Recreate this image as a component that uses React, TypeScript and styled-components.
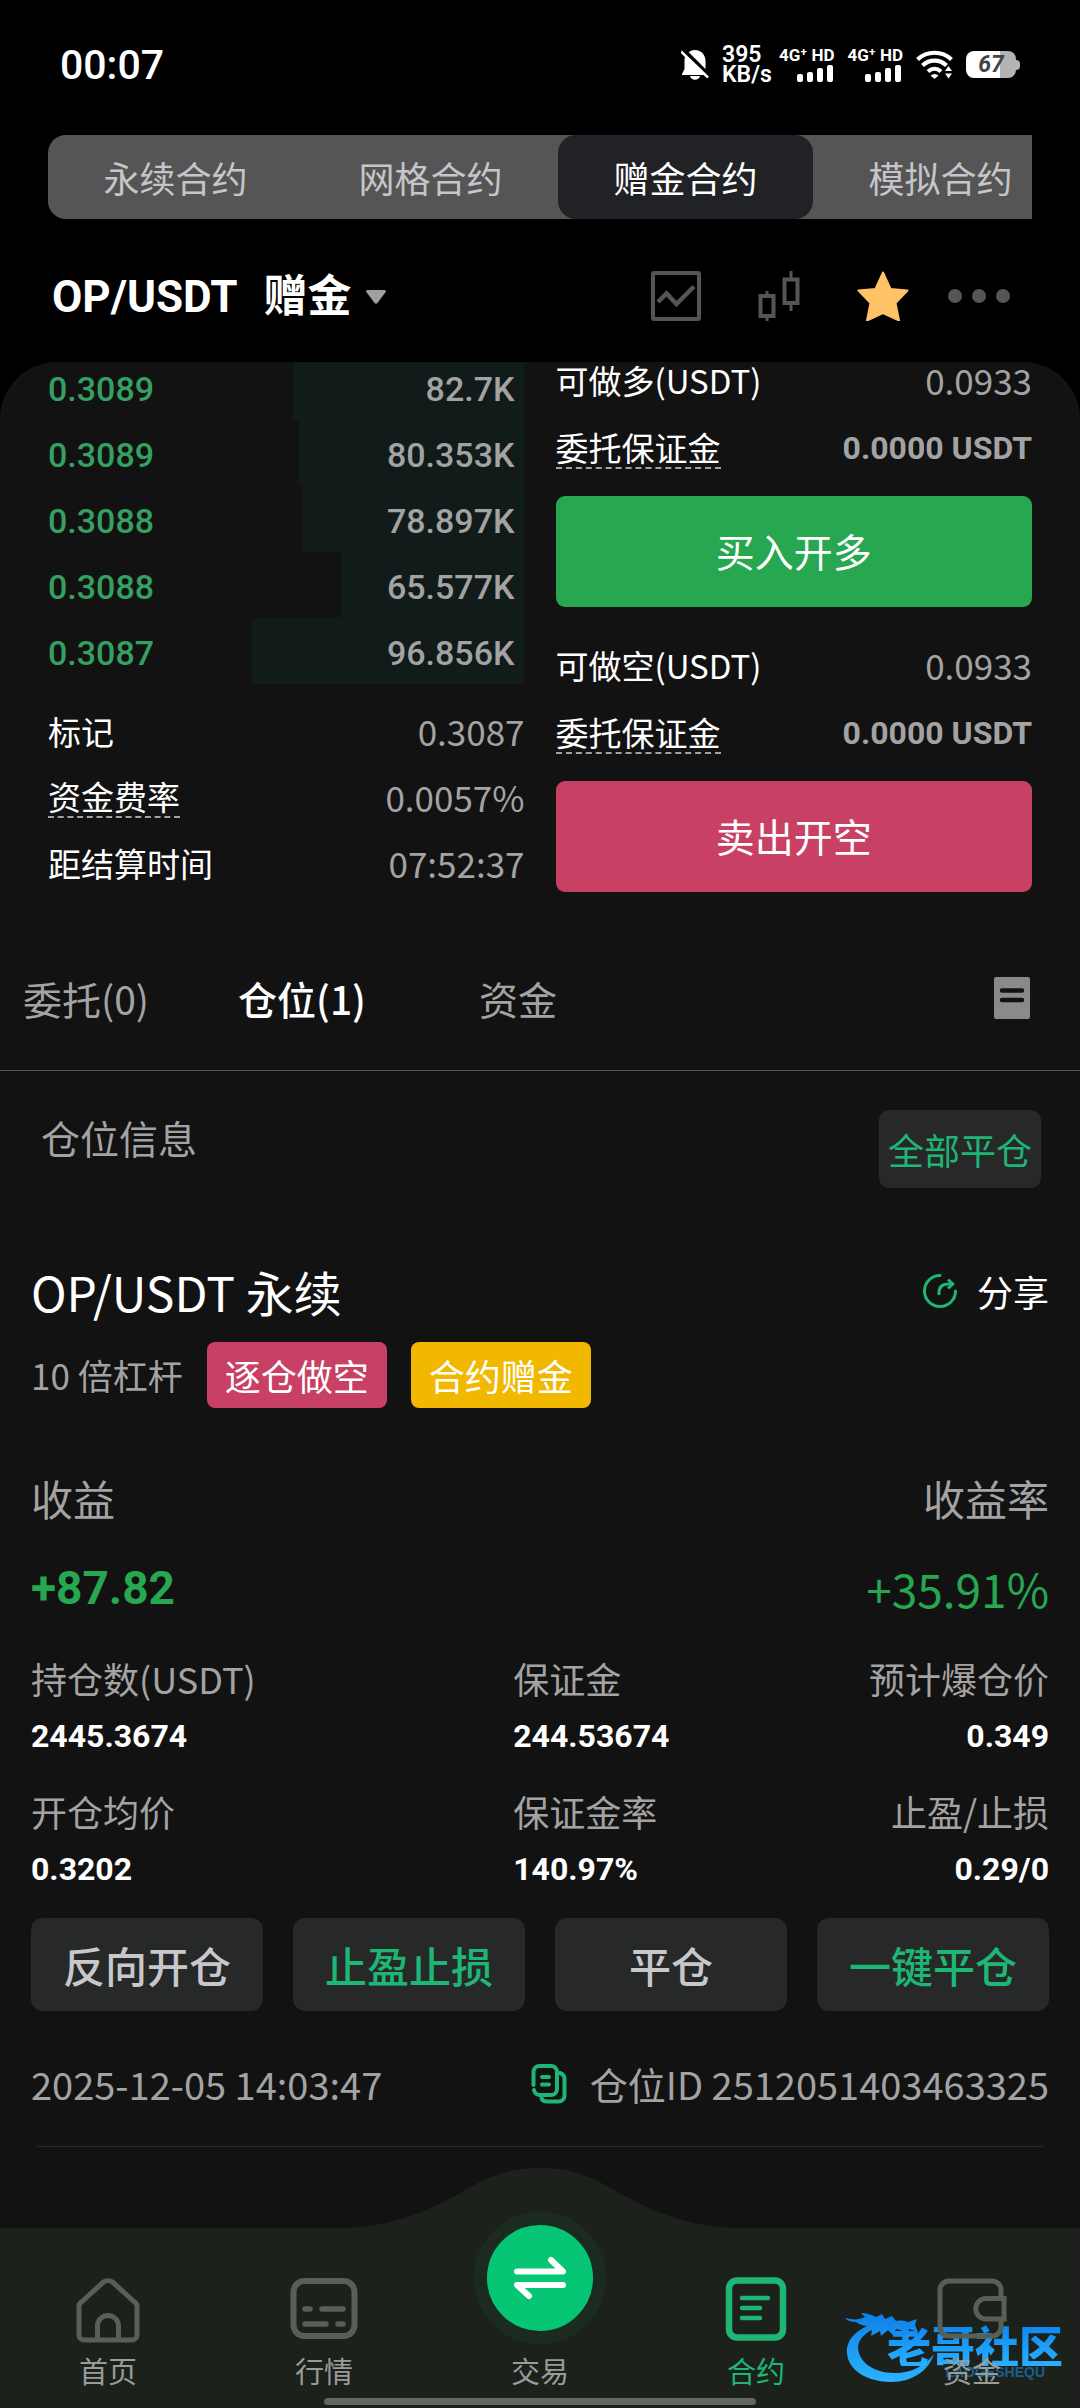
import React from "react";
import styled, { createGlobalStyle } from "styled-components";

const cjk = `"Noto Sans CJK SC", "Noto Sans", sans-serif`;
const num = `Roboto, "Noto Sans CJK SC", sans-serif`;

const c = {
  panel: "#121212",
  green: "#26a750",
  mint: "#1eb675",
  red: "#c94065",
  gold: "#f2b800",
  grey: "#a3a3a3",
  dim: "#555555",
  box: "#272929",
  nav: "#1c211c",
  navIcon: "#566054",
};

const Global = createGlobalStyle`
  * { box-sizing: border-box; }
  body { margin: 0; background: #000; font-family: ${cjk}; color: #fff; }
  button { border: 0; padding: 0; background: none; color: inherit; font: inherit; cursor: pointer; }
  a { color: inherit; text-decoration: none; }
  svg { display: block; flex: none; }
`;

const Screen = styled.div`
  min-height: 100vh;
  display: flex;
  flex-direction: column;
  overflow: hidden;
`;

/* ---------- status bar ---------- */
const StatusBar = styled.header`
  height: 135px;
  padding: 0 60px 6px;
  display: flex;
  align-items: center;
  justify-content: space-between;
`;
const Clock = styled.time`
  font: 500 41px/48px ${num};
`;
const StatusIcons = styled.div`
  display: flex;
  align-items: center;
  gap: 13px;
`;
const Speed = styled.div`
  font: 600 23px/20px ${num};
  width: 44px;
`;
const Signal = styled.div`
  display: flex;
  flex-direction: column;
  align-items: flex-end;
  gap: 2px;
  font: 700 17px/16px ${num};
  white-space: nowrap;
`;
const Battery = styled.div`
  height: 27px;
  width: 50px;
  border-radius: 8px;
  background: linear-gradient(90deg, #fff 67%, #b4b4b4 67%);
  color: #444;
  font: italic 700 23px/28px ${num};
  text-align: center;
`;
const BatteryWrap = styled.div`
  display: flex;
  align-items: center;
  &::after {
    content: "";
    width: 4px;
    height: 10px;
    border-radius: 0 4px 4px 0;
    background: #b4b4b4;
  }
`;

/* ---------- contract type tabs ---------- */
const TypeTabs = styled.nav`
  margin: 0 48px;
  height: 84px;
  display: flex;
  overflow: hidden;
  border-radius: 18px 0 0 18px;
  background: ${c.dim};
`;
const TypeTab = styled.button<{ $active?: boolean }>`
  flex: 0 0 255px;
  border-radius: 18px;
  font-size: 36px;
  line-height: 48px;
  color: ${(p) => (p.$active ? "#fff" : "#c6c5ca")};
  background: ${(p) => (p.$active ? "#212226" : "transparent")};
`;

/* ---------- pair header ---------- */
const PairBar = styled.div`
  height: 143px;
  padding: 10px 70px 0 52px;
  display: flex;
  align-items: center;
  justify-content: space-between;
`;
const PairButton = styled.button`
  padding-top: 3px;
  display: flex;
  align-items: center;
  gap: 14px;
  font: 700 44px/60px ${num};
`;
const PairName = styled.span`
  margin-right: 12px;
`;
const Tools = styled.div`
  display: flex;
  align-items: center;
`;
const Tool = styled.button<{ $gap?: number }>`
  margin-left: ${(p) => p.$gap ?? 0}px;
`;

/* ---------- trading panel ---------- */
const Panel = styled.main`
  flex: 1;
  background: ${c.panel};
  border-radius: 57px 57px 0 0;
  overflow: hidden;
`;
const Trade = styled.section`
  padding: 0 48px 33px;
  display: grid;
  grid-template-columns: 1fr 1fr;
  gap: 31px;
`;
const BookColumn = styled.div`
  margin-top: -8px;
`;
const BookRow = styled.div<{ $depth: number }>`
  height: 66px;
  padding: 4px 10px 0 0;
  display: flex;
  align-items: center;
  justify-content: space-between;
  font: 500 34px/44px ${num};
  color: ${c.grey};
  background: linear-gradient(#111c1a, #111c1a) right / ${(p) => p.$depth}% 100% no-repeat;
`;
const BidPrice = styled.span`
  color: #35a061;
`;
const InfoList = styled.div`
  padding-top: 14px;
`;
const Line = styled.div<{ $h: number }>`
  height: ${(p) => p.$h}px;
  display: flex;
  align-items: center;
  justify-content: space-between;
  font-size: 33px;
  line-height: 40px;
`;
const Hint = styled.span`
  border-bottom: 2px dashed ${c.grey};
`;
const Value = styled.span`
  font-size: 35px;
  color: ${c.grey};
`;
const BoldValue = styled.span`
  font: 700 32px/40px ${num};
  color: ${c.grey};
`;
const OrderColumn = styled.div`
  margin-top: -16px;
`;
const OrderButton = styled.button<{ $tone: string }>`
  width: 100%;
  height: 111px;
  margin: 14px 0 24px;
  padding-bottom: 3px;
  border-radius: 9px;
  background: ${(p) => p.$tone};
  font-size: 39px;
  &:last-child {
    margin-bottom: 0;
  }
`;

/* ---------- lower tabs ---------- */
const ListTabs = styled.nav`
  height: 142px;
  padding: 0 50px 3px 0;
  border-bottom: 1px solid ${c.dim};
  display: flex;
  align-items: center;
`;
const ListTabGroup = styled.div`
  flex: 1;
  display: flex;
  margin-left: -22px;
`;
const ListTab = styled.button<{ $active?: boolean }>`
  width: 216px;
  font-size: 39px;
  line-height: 56px;
  font-weight: ${(p) => (p.$active ? 500 : 400)};
  color: ${(p) => (p.$active ? "#fff" : c.grey)};
`;
const PositionsHead = styled.div`
  padding: 39px 39px 0 41px;
  display: flex;
  align-items: flex-start;
  justify-content: space-between;
`;
const HeadTitle = styled.h2`
  margin: 0;
  font-size: 39px;
  line-height: 54px;
  font-weight: 400;
  color: ${c.grey};
`;
const CloseAll = styled.button`
  width: 162px;
  height: 78px;
  border-radius: 10px;
  background: ${c.box};
  color: ${c.mint};
  font-size: 36px;
`;

/* ---------- position card ---------- */
const Card = styled.article`
  padding: 70px 31px 0;
`;
const CardRow = styled.div<{ $h: number; $top?: number }>`
  height: ${(p) => p.$h}px;
  margin-top: ${(p) => p.$top ?? 0}px;
  display: flex;
  align-items: center;
  justify-content: space-between;
`;
const Pair = styled.h3`
  margin: 0;
  font-size: 48px;
  line-height: 62px;
  font-weight: 400;
`;
const Share = styled.button`
  display: flex;
  align-items: center;
  gap: 19px;
  font-size: 36px;
  line-height: 48px;
`;
const Badges = styled.div`
  margin-top: 18px;
  display: flex;
  align-items: center;
  gap: 24px;
  font-size: 36px;
  line-height: 66px;
`;
const Lever = styled.span`
  font-size: 35px;
  color: ${c.grey};
`;
const Badge = styled.span<{ $tone: string }>`
  padding: 0 18px;
  border-radius: 8px;
  background: ${(p) => p.$tone};
`;
const Label = styled.span<{ $size: number }>`
  font-size: ${(p) => p.$size}px;
  line-height: 50px;
  color: ${c.grey};
`;
const Profit = styled.strong`
  font: 700 46px/60px ${num};
  color: ${c.green};
`;
const ProfitRate = styled.span`
  font-size: 46px;
  line-height: 60px;
  color: ${c.green};
`;
const Stats = styled.div`
  margin-top: 35px;
  display: grid;
  grid-template-columns: 9fr 5fr 5fr;
  row-gap: 30px;
`;
const Stat = styled.div<{ $end?: boolean }>`
  display: flex;
  flex-direction: column;
  gap: 13px;
  white-space: nowrap;
  align-items: ${(p) => (p.$end ? "flex-end" : "flex-start")};
`;
const StatValue = styled.strong`
  font: 700 32px/40px ${num};
`;
const Actions = styled.div`
  margin-top: 29px;
  display: grid;
  grid-template-columns: repeat(4, 1fr);
  gap: 30px;
`;
const Action = styled.button<{ $accent?: boolean }>`
  height: 93px;
  border-radius: 12px;
  background: ${c.box};
  color: ${(p) => (p.$accent ? c.mint : "#c8c7cc")};
  font-size: 42px;
  font-weight: 500;
`;
const Meta = styled.span`
  font-size: 38px;
  line-height: 48px;
  color: ${c.grey};
`;
const IdGroup = styled.div`
  display: flex;
  align-items: center;
  gap: 23px;
`;
const Divider = styled.hr`
  margin: 32px 6px 0;
  border: 0;
  height: 1px;
  background: #2a2b2b;
`;

/* ---------- bottom navigation ---------- */
const BottomNav = styled.nav`
  position: relative;
  background: ${c.panel};
`;
const Bump = styled.svg`
  margin: 0 auto;
`;
const NavBar = styled.div`
  height: 180px;
  background: ${c.nav};
  display: flex;
  flex-direction: column;
  justify-content: flex-end;
  align-items: center;
`;
const NavItems = styled.div`
  position: relative;
  flex: none;
  width: 100%;
  display: grid;
  grid-template-columns: repeat(5, 1fr);
  align-items: end;
  margin-bottom: 10px;
`;
const NavItem = styled.a<{ $active?: boolean }>`
  display: flex;
  flex-direction: column;
  align-items: center;
  gap: 9px;
  font-size: 29px;
  line-height: 36px;
  color: ${(p) => (p.$active ? c.mint : "#999c98")};
`;
const TradeDisc = styled.span`
  width: 132px;
  height: 132px;
  margin-bottom: -1px;
  border: 13px solid #1c2b1f;
  border-radius: 50%;
  background: #06c575;
  display: grid;
  place-items: center;
`;
const HomeIndicator = styled.div`
  flex: none;
  width: 40%;
  height: 7px;
  margin-bottom: 3px;
  border-radius: 4px;
  background: #616861;
`;
const Watermark = styled.div`
  position: absolute;
  right: 17px;
  bottom: 24px;
  display: flex;
  align-items: flex-end;
`;
const MarkText = styled.div`
  margin-left: -56px;
  padding-bottom: 6px;
  display: flex;
  flex-direction: column;
  align-items: flex-end;
`;
const MarkName = styled.span`
  font: 900 44px/42px ${cjk};
  color: transparent;
  background: linear-gradient(#0d86f0, #2ab0ff);
  background-clip: text;
  -webkit-background-clip: text;
`;
const MarkLatin = styled.span`
  padding-right: 18px;
  font: 700 14px/12px "Liberation Sans", sans-serif;
  color: #1c5f8c;
`;

const bids = [
  { price: "0.3089", amount: "82.7K", depth: 48.5 },
  { price: "0.3089", amount: "80.353K", depth: 47.2 },
  { price: "0.3088", amount: "78.897K", depth: 46.4 },
  { price: "0.3088", amount: "65.577K", depth: 38.4 },
  { price: "0.3087", amount: "96.856K", depth: 57.1 },
];

const stats = [
  ["持仓数(USDT)", "2445.3674"],
  ["保证金", "244.53674"],
  ["预计爆仓价", "0.349"],
  ["开仓均价", "0.3202"],
  ["保证金率", "140.97%"],
  ["止盈/止损", "0.29/0"],
];

const actions = [
  { text: "反向开仓" },
  { text: "止盈止损", accent: true },
  { text: "平仓" },
  { text: "一键平仓", accent: true },
];

const SignalBars = () => (
  <svg width="38" height="17" viewBox="0 0 38 17" fill="#fff">
    <rect x="0" y="9" width="6" height="8" rx="2" />
    <rect x="10" y="7" width="6" height="10" rx="2" />
    <rect x="20" y="3" width="6" height="14" rx="2" />
    <rect x="30" y="0" width="6" height="17" rx="2" />
  </svg>
);

const icons = {
  home: (
    <svg width="66" height="66" viewBox="0 0 66 66" fill="none" stroke={c.navIcon} strokeWidth="5">
      <path d="M4 29c0-1 .5-2 1.400-3L28 5.500c3-2.500 7-2.500 10 0L60.600 26c.9 1 1.400 2 1.400 3v29a5 5 0 0 1-5 5H9a5 5 0 0 1-5-5z" />
      <path d="M22.500 62V49a10.500 10.500 0 0 1 21 0v13" />
    </svg>
  ),
  market: (
    <svg width="68" height="66" viewBox="0 0 68 66" fill="none" stroke={c.navIcon}>
      <rect x="3.500" y="4" width="61" height="55" rx="11" strokeWidth="6" />
      <path d="M15 32h5M32 32h21M15 47h21M48 47h5" strokeWidth="5.500" strokeLinecap="round" />
    </svg>
  ),
  contract: (
    <svg width="62" height="66" viewBox="0 0 62 66" fill="none" stroke={c.mint}>
      <rect x="4" y="3.500" width="54" height="57" rx="8" strokeWidth="6.500" />
      <path d="M17 21h26M17 31h18M17 41h18" strokeWidth="4.500" strokeLinecap="round" />
    </svg>
  ),
  wallet: (
    <svg width="70" height="66" viewBox="0 0 70 66" fill="none" stroke={c.navIcon} strokeWidth="5">
      <path d="M64 20v-7a9 9 0 0 0-9-9H12a9 9 0 0 0-9 9v37a9 9 0 0 0 9 9h43a9 9 0 0 0 9-9v-7" />
      <path d="M67 21.500H49a10.200 10.200 0 0 0 0 20.500h18z" />
    </svg>
  ),
};

export default function App() {
  return (
    <Screen>
      <Global />
      <StatusBar>
        <Clock>00:07</Clock>
        <StatusIcons>
          <svg width="28" height="32" viewBox="0 0 28 32">
            <path d="M14 1c6.500 0 10.500 5 10.500 11v8l2.500 5v1H1v-1l2.500-5v-8C3.500 6 7.500 1 14 1zM9 27h10c-1 5-9 5-10 0z" fill="#fff" />
            <path d="M2 1l28 28" stroke="#000" strokeWidth="5" />
            <path d="M0 2.500l27 26" stroke="#fff" strokeWidth="2.500" />
          </svg>
          <Speed>
            395
            <br />
            KB/s
          </Speed>
          <Signal>
            4G⁺ HD
            <SignalBars />
          </Signal>
          <Signal>
            4G⁺ HD
            <SignalBars />
          </Signal>
          <svg width="37" height="30" viewBox="0 0 37 30" fill="none" stroke="#fff" strokeWidth="4.200">
            <path d="M1.500 9.500c9.500-9 24.500-9 34 0" />
            <path d="M6.500 15.500c7-6.500 17-6.500 24 0" />
            <path d="M12 21.500c4-3.500 9-3.500 13 0" />
            <path d="M14.500 25.500L18.500 29l4-3.500c-2.500-2-5.500-2-8 0z" fill="#fff" stroke="none" />
            <path d="M29 21l3.500-5 3.500 5zM29 23.500l3.500 5 3.500-5z" fill="#fff" stroke="none" />
          </svg>
          <BatteryWrap>
            <Battery>67</Battery>
          </BatteryWrap>
        </StatusIcons>
      </StatusBar>

      <TypeTabs>
        <TypeTab>永续合约</TypeTab>
        <TypeTab>网格合约</TypeTab>
        <TypeTab $active>赠金合约</TypeTab>
        <TypeTab>模拟合约</TypeTab>
      </TypeTabs>

      <PairBar>
        <PairButton>
          <PairName>OP/USDT</PairName>
          赠金
          <svg width="20" height="14" viewBox="0 0 20 14">
            <path d="M2 0h16q3 0 1.300 2.500L11.500 13q-1.500 1.500-3 0L.7 2.500Q-1 0 2 0z" fill="#a0a0a0" />
          </svg>
        </PairButton>
        <Tools>
          <Tool aria-label="走势">
            <svg width="50" height="50" viewBox="0 0 50 50" fill="none" stroke={c.dim}>
              <rect x="2" y="2" width="46" height="46" rx="1" strokeWidth="4" />
              <path d="M7 31l8.500-8.500L25.500 33 43 15.500" strokeWidth="4.500" />
            </svg>
          </Tool>
          <Tool aria-label="K线" $gap={57}>
            <svg width="42" height="50" viewBox="0 0 42 50" fill="none" stroke={c.dim} strokeWidth="4">
              <rect x="2.500" y="25" width="13" height="20" />
              <path d="M9 20v5M9 45v5" strokeWidth="3" />
              <rect x="26.500" y="8.500" width="13" height="23.500" />
              <path d="M33 0v8M33 32v8" strokeWidth="3" />
            </svg>
          </Tool>
          <Tool aria-label="收藏" $gap={57}>
            <svg width="52" height="50" viewBox="0 0 52 50">
              <path d="M26 1.500L33.500 18l17 1.500L38.500 32l3.500 17.500L26 42 10 49.500 13.500 32 1.500 19.500l17-1.500z" fill="#ffc266" stroke="#ffc266" strokeWidth="2" strokeLinejoin="round" />
            </svg>
          </Tool>
          <Tool aria-label="更多" $gap={39}>
            <svg width="62" height="14" viewBox="0 0 62 14" fill={c.dim}>
              <circle cx="7" cy="7" r="7" />
              <circle cx="31" cy="7" r="7" />
              <circle cx="55" cy="7" r="7" />
            </svg>
          </Tool>
        </Tools>
      </PairBar>

      <Panel>
        <Trade>
          <BookColumn>
            {bids.map((b) => (
              <BookRow key={b.amount} $depth={b.depth}>
                <BidPrice>{b.price}</BidPrice>
                <span>{b.amount}</span>
              </BookRow>
            ))}
            <InfoList>
              <Line $h={66}>
                <span>标记</span>
                <Value>0.3087</Value>
              </Line>
              <Line $h={66}>
                <Hint>资金费率</Hint>
                <Value>0.0057%</Value>
              </Line>
              <Line $h={66}>
                <span>距结算时间</span>
                <Value>07:52:37</Value>
              </Line>
            </InfoList>
          </BookColumn>
          <OrderColumn>
            <Line $h={68}>
              <span>可做多(USDT)</span>
              <Value>0.0933</Value>
            </Line>
            <Line $h={68}>
              <Hint>委托保证金</Hint>
              <BoldValue>0.0000 USDT</BoldValue>
            </Line>
            <OrderButton $tone={c.green}>买入开多</OrderButton>
            <Line $h={68}>
              <span>可做空(USDT)</span>
              <Value>0.0933</Value>
            </Line>
            <Line $h={68}>
              <Hint>委托保证金</Hint>
              <BoldValue>0.0000 USDT</BoldValue>
            </Line>
            <OrderButton $tone={c.red}>卖出开空</OrderButton>
          </OrderColumn>
        </Trade>

        <ListTabs>
          <ListTabGroup>
            <ListTab>委托(0)</ListTab>
            <ListTab $active>仓位(1)</ListTab>
            <ListTab>资金</ListTab>
          </ListTabGroup>
          <button aria-label="历史记录">
            <svg width="36" height="42" viewBox="0 0 36 42">
              <rect width="36" height="42" rx="2" fill="#8a8a8a" />
              <path d="M8 13.500h20M8 23h20" stroke={c.panel} strokeWidth="4.500" strokeLinecap="round" />
            </svg>
          </button>
        </ListTabs>

        <PositionsHead>
          <HeadTitle>仓位信息</HeadTitle>
          <CloseAll>全部平仓</CloseAll>
        </PositionsHead>

        <Card>
          <CardRow $h={66}>
            <Pair>OP/USDT 永续</Pair>
            <Share>
              <svg width="36" height="36" viewBox="0 0 36 36" fill="none" stroke={c.mint} strokeWidth="3">
                <path d="M18 2.500A15.500 15.500 0 1 0 33.500 18" strokeLinecap="round" />
                <path d="M17 22v-2c0-6 3-9 9-9h4M26 6.500l5 4.500-5 4.500" strokeLinejoin="round" />
              </svg>
              分享
            </Share>
          </CardRow>
          <Badges>
            <Lever>10 倍杠杆</Lever>
            <Badge $tone={c.red}>逐仓做空</Badge>
            <Badge $tone={c.gold}>合约赠金</Badge>
          </Badges>
          <CardRow $h={60} $top={60}>
            <Label $size={42}>收益</Label>
            <Label $size={42}>收益率</Label>
          </CardRow>
          <CardRow $h={60} $top={30}>
            <Profit>+87.82</Profit>
            <ProfitRate>+35.91%</ProfitRate>
          </CardRow>
          <Stats>
            {stats.map(([label, value], i) => (
              <Stat key={label} $end={i % 3 === 2}>
                <Label $size={36}>{label}</Label>
                <StatValue>{value}</StatValue>
              </Stat>
            ))}
          </Stats>
          <Actions>
            {actions.map((a) => (
              <Action key={a.text} $accent={a.accent}>
                {a.text}
              </Action>
            ))}
          </Actions>
          <CardRow $h={60} $top={43}>
            <Meta>2025-12-05 14:03:47</Meta>
            <IdGroup>
              <button aria-label="复制">
                <svg width="36" height="40" viewBox="0 0 36 40" fill="none" stroke={c.mint} strokeWidth="4" strokeLinecap="round">
                  <path d="M2.500 21V8a6 6 0 0 1 6-6H20a6 6 0 0 1 6 6v17a6 6 0 0 1-6 6H9c-3 0-5.500-2-6-5" />
                  <path d="M29 9c3 1 4.500 3 4.500 6v16.500a6 6 0 0 1-6 6H16c-3 0-5-1.500-5.500-3.500" />
                  <path d="M11 13h7M11 20.500h7" />
                </svg>
              </button>
              <Meta>仓位ID 2512051403463325</Meta>
            </IdGroup>
          </CardRow>
          <Divider />
        </Card>
      </Panel>

      <BottomNav>
        <Bump width="404" height="60" viewBox="0 0 404 60">
          <path d="M0 60C52 60 90 43 117 28 148 10 167 0 202 0s54 10 85 28c27 15 65 32 117 32z" fill={c.nav} />
        </Bump>
        <NavBar>
          <Watermark aria-hidden="true">
            <svg width="98" height="76" viewBox="0 0 98 76">
              <defs>
                <linearGradient id="dragon" x1="0" y1="0" x2="0" y2="76" gradientUnits="userSpaceOnUse">
                  <stop offset="0" stopColor="#0b7de6" />
                  <stop offset="1" stopColor="#2cb4ff" />
                </linearGradient>
              </defs>
              <g fill="url(#dragon)">
                <path d="M30 15C11 21 1 32 2 45c1 17 20 29 44 29 22 0 38-12 43-28-9 12-23 19-39 19-22 0-36-11-37-25 0-9 8-17 21-21z" />
                <path d="M1 10c7 2 13 2 19-1l-4-4c6 0 11 2 15 4l6-3 3 5 7-3 4 5c6-1 9 0 12 1l9-3-2 6 3 7-9-3-6 2-7-2-3 6-5-5-7 6-1-5-9 5 1-6-7 1 3-5c-5 0-9-2-12-4-4 0-8-1-11-4z" />
              </g>
            </svg>
            <MarkText>
              <MarkName>老哥社区</MarkName>
              <MarkLatin>LAOGESHEQU</MarkLatin>
            </MarkText>
          </Watermark>
          <NavItems>
            <NavItem href="#home">
              {icons.home}
              首页
            </NavItem>
            <NavItem href="#market">
              {icons.market}
              行情
            </NavItem>
            <NavItem href="#trade">
              <TradeDisc>
                <svg width="54" height="44" viewBox="0 0 54 44" fill="none" stroke="#fff" strokeWidth="6" strokeLinecap="round" strokeLinejoin="round">
                  <path d="M4 15.500h46L38 4M50 29H4l12 11" />
                </svg>
              </TradeDisc>
              交易
            </NavItem>
            <NavItem href="#contract" $active>
              {icons.contract}
              合约
            </NavItem>
            <NavItem href="#assets">
              {icons.wallet}
              资金
            </NavItem>
          </NavItems>
          <HomeIndicator />
        </NavBar>
      </BottomNav>
    </Screen>
  );
}
